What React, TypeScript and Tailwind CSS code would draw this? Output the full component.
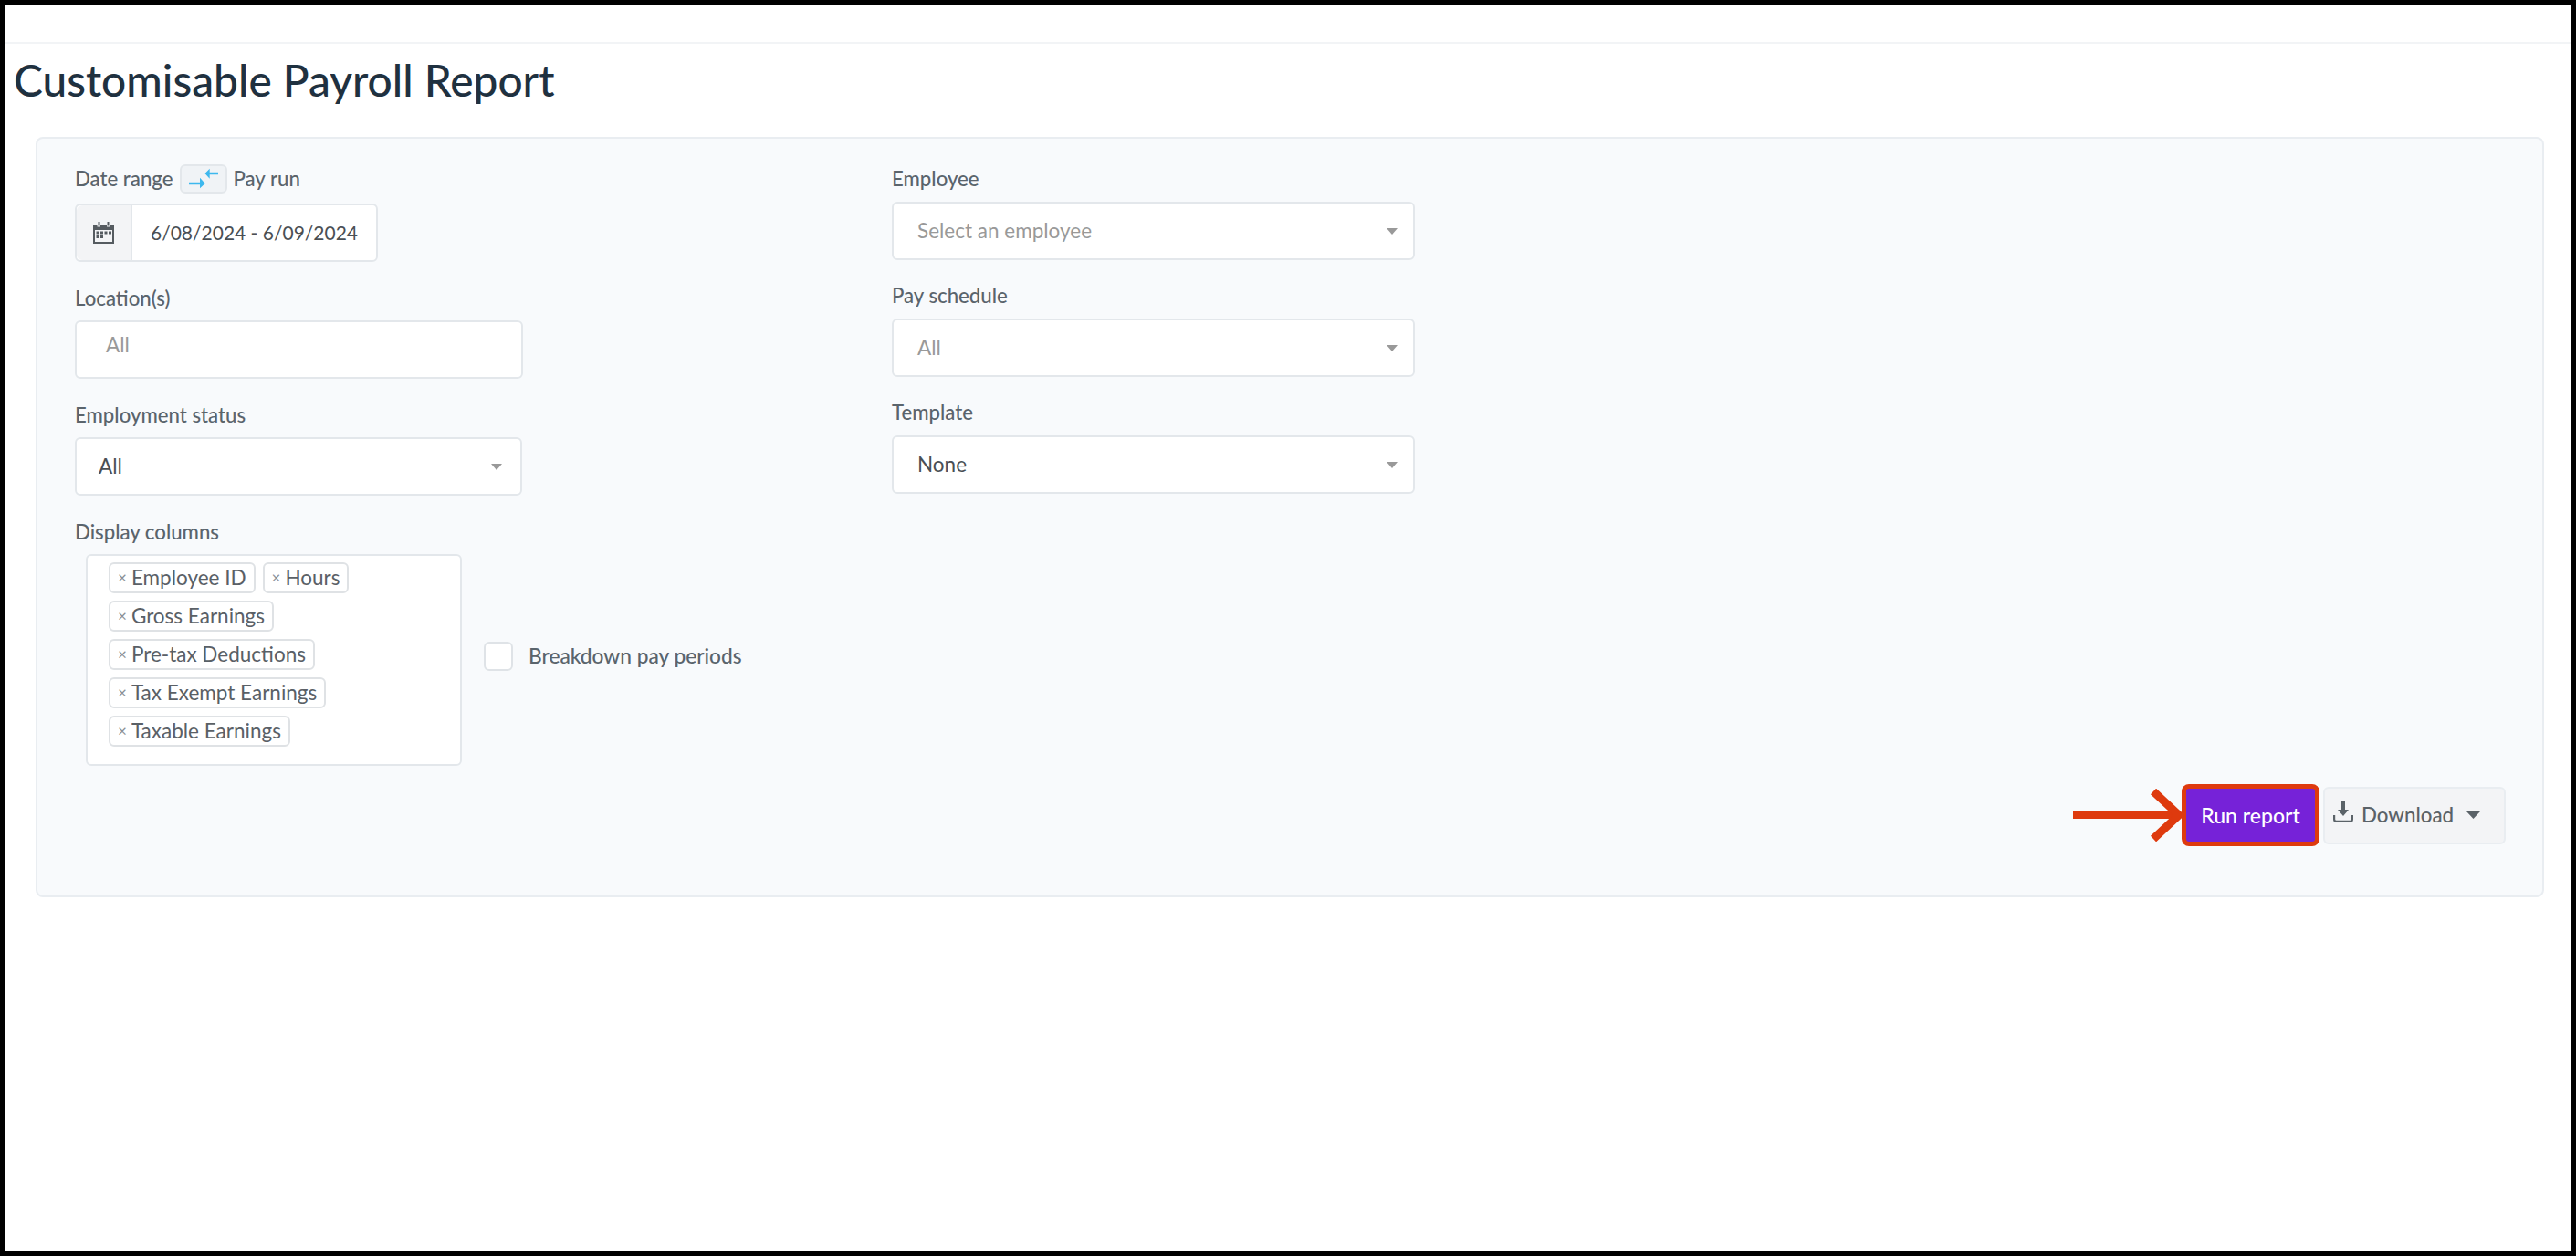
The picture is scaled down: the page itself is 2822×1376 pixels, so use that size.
import React from 'react';

const font = "font-['Lato','Open_Sans',sans-serif]";

function Caret({ className = 'text-[#999999]', big }: { className?: string; big?: boolean }) {
  return (
    <svg width={big ? 15 : 12} height={big ? 8 : 7} viewBox="0 0 12 7" preserveAspectRatio="none" className={className}>
      <path d="M0 0h12L6 7z" fill="currentColor" />
    </svg>
  );
}

function SwapIcon() {
  return (
    <svg width="32" height="23" viewBox="0 0 32 23" fill="#3db8ee">
      <path d="M32 4.800H22.700V.7L17.500 6l5.200 5.700V7.200H32z" />
      <path d="M0 15.800h12v-5.100l5.700 6.300-5.700 5.300v-4.100H0z" />
    </svg>
  );
}

function CalendarIcon() {
  return (
    <svg width="23" height="24" viewBox="0 0 23 24" fill="#555b60">
      <path fillRule="evenodd" d="M0 3h4.500v2.500H8V3h7v2.500h3.500V3H23v21H0zM2 9v13h19V9z" />
      <path d="M5.500 0h2v4.500h-2zM15.500 0h2v4.500h-2z" />
      <path d="M3.500 10.500h3v3h-3zM8 10.500h3v3H8zM12.500 10.500h3v3h-3zM17 10.500h3v3h-3zM3.500 15h3v3h-3zM8 15h3v3H8z" />
    </svg>
  );
}

function DownloadIcon() {
  return (
    <svg width="22" height="23" viewBox="0 0 22 23" fill="#5a6268" className="-mt-2">
      <path d="M9 0h4v9h4l-6 7-6-7h4z" />
      <path d="M0 15h2.200v4.500q0 1.300 1.300 1.300h15q1.300 0 1.300-1.300V15H22v4.500q0 3.500-3.500 3.500h-15Q0 23 0 19.500z" />
    </svg>
  );
}

function Select({ value, muted, className }: { value: string; muted?: boolean; className: string }) {
  return (
    <div className={`h-16 flex items-center justify-between rounded-md border-2 border-[#e3e7eb] bg-white ${className}`}>
      <span className={`text-[22.5px] ${muted ? 'text-[#999999]' : 'text-[#4a4f54]'}`}>{value}</span>
      <Caret />
    </div>
  );
}

function Field({ label, children }: { label: React.ReactNode; children: React.ReactNode }) {
  return (
    <div className="flex flex-col">
      <div className="h-[25px] flex items-center gap-1.5 text-[22.2px] text-[#5a646c] font-medium">{label}</div>
      {children}
    </div>
  );
}

function Tag({ text }: { text: string }) {
  return (
    <span className="h-[34px] flex items-center gap-[5px] pl-2 pr-2 rounded-md border-2 border-[#dfe2e5] bg-white text-[22.5px] text-[#5a6066]">
      <span className="text-[17px] text-[#8a9096]">×</span>
      {text}
    </span>
  );
}

export default function App() {
  return (
    <div className={`h-screen overflow-hidden border-[5px] border-black bg-white ${font}`}>
      <div className="h-[43px] border-b-2 border-[#f2f4f6]" />
      <h1 className="ml-[10px] mt-[16px] h-[48px] text-[47.8px] leading-[48px] font-medium text-[#1f3140]">Customisable Payroll Report</h1>
      <div className="ml-[34px] mr-[30px] mt-[38px] h-[833px] rounded-lg border-2 border-[#e9edf1] bg-[#f8fafc] pl-[41px] pr-[40px] pt-[31px]">
        <div className="flex h-[676px]">
          <div className="w-[895px] flex flex-col">
            <Field
              label={
                <>
                  Date range
                  <span className="w-[52px] h-[32px] ml-0.5 flex items-center justify-center rounded-md border-2 border-[#e3e7eb] bg-[#f0f3f6]">
                    <SwapIcon />
                  </span>
                  Pay run
                </>
              }
            >
              <div className="mt-[15px] w-[332px] h-16 flex rounded-md border-2 border-[#e3e7eb] bg-white">
                <div className="w-[61px] flex items-center justify-center bg-[#f3f4f6] border-r-2 border-[#e3e7eb] rounded-l-md">
                  <CalendarIcon />
                </div>
                <div className="flex items-center pl-5 text-[21px] text-[#4a4f54]">6/08/2024 - 6/09/2024</div>
              </div>
            </Field>
            <div className="mt-[27px]">
              <Field label="Location(s)">
                <div className="mt-[12px] w-[491px] h-16 flex pt-[8px] pl-8 rounded-md border-2 border-[#e3e7eb] bg-white text-[22.5px] text-[#999999]">All</div>
              </Field>
            </div>
            <div className="mt-[27px]">
              <Field label="Employment status">
                <Select value="All" className="mt-[12px] w-[490px] pl-6 pr-5" />
              </Field>
            </div>
            <div className="mt-[27px]">
              <Field label="Display columns">
                <div className="flex items-start mt-[12px]">
                  <div className="ml-[12px] w-[412px] h-[232px] rounded-md border-2 border-[#e3e7eb] bg-white pl-[23px] pr-[20px] pt-[7px] flex flex-wrap content-start gap-x-2 gap-y-2">
                    <Tag text="Employee ID" />
                    <Tag text="Hours" />
                    <div className="w-full flex"><Tag text="Gross Earnings" /></div>
                    <div className="w-full flex"><Tag text="Pre-tax Deductions" /></div>
                    <div className="w-full flex"><Tag text="Tax Exempt Earnings" /></div>
                    <div className="w-full flex"><Tag text="Taxable Earnings" /></div>
                  </div>
                  <div className="ml-6 mt-[95px] flex items-center">
                    <div className="w-8 h-8 rounded-md border-2 border-[#dfe3e7] bg-white" />
                    <span className="ml-[17px] text-[22.7px] text-[#5a646c] font-medium">Breakdown pay periods</span>
                  </div>
                </div>
              </Field>
            </div>
          </div>
          <div className="w-[573px] flex flex-col">
            <Field label="Employee">
              <Select value="Select an employee" muted className="mt-[13px] pl-[26px] pr-[17px]" />
            </Field>
            <div className="mt-[26px]">
              <Field label="Pay schedule">
                <Select value="All" muted className="mt-[13px] pl-[26px] pr-[17px]" />
              </Field>
            </div>
            <div className="mt-[26px]">
              <Field label="Template">
                <Select value="None" className="mt-[13px] pl-[26px] pr-[17px]" />
              </Field>
            </div>
          </div>
        </div>
        <div className="flex items-center justify-end">
          <svg width="119" height="58" viewBox="0 0 119 58" fill="none" stroke="#de3a0e">
            <path d="M0 29h114" strokeWidth="8" />
            <path d="M88 3l28 26-28 26" strokeWidth="9" />
          </svg>
          <button className="w-[151px] h-[68px] rounded-lg border-[5px] border-[#de3a0e] bg-[#7622d8] text-[23px] font-medium text-white">Run report</button>
          <button className="ml-1 w-[200px] h-[63px] flex items-center pl-[9px] rounded-md border-2 border-[#e9edf1] bg-[#f3f4f6] text-[22.3px] text-[#5a6268] font-medium">
            <DownloadIcon />
            <span className="ml-[9px]">Download</span>
            <span className="ml-[14px]"><Caret big className="text-[#5a6268]" /></span>
          </button>
        </div>
      </div>
    </div>
  );
}
